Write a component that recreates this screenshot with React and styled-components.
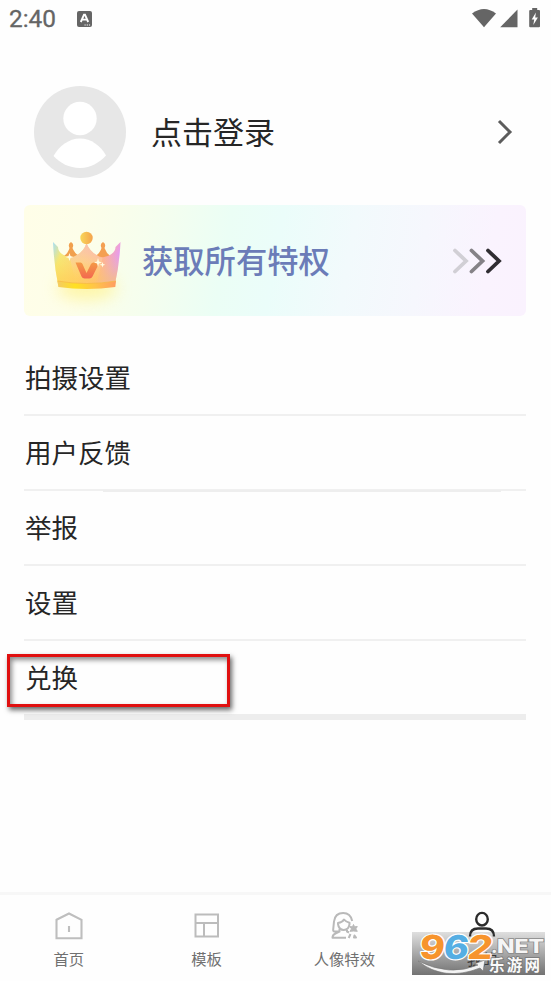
import React, { Component } from "react"
import styled, { createGlobalStyle } from "styled-components"

const GlobalStyle = createGlobalStyle`
* {
  box-sizing: border-box;
}
body {
  margin: 0;
  background: #fefefe;
  font-family: Roboto, "Noto Sans CJK SC", sans-serif;
}
`

const Screen = styled.div`
display: flex;
flex-direction: column;
width: 551px;
height: 981px;
overflow: hidden;
background: #fefefe;
color: #262626;
`

const StatusBar = styled.header`
display: flex;
align-items: center;
height: 38px;
padding: 0 9px;
flex: none;
color: #656565;
`

const Time = styled.span`
width: 68px;
font-size: 24.4px;
line-height: 38px;
-webkit-text-stroke: 0.3px #656565;
`

const StatusIcons = styled.div`
margin-left: auto;
display: flex;
align-items: center;
height: 38px;
`

const Profile = styled.section`
display: flex;
align-items: center;
height: 92px;
margin-top: 48px;
padding: 0 38px 0 34px;
flex: none;
`

const Login = styled.span`
flex: 1;
padding-top: 4px;
margin-left: 25px;
font-size: 31px;
line-height: 46px;
`

const Banner = styled.section`
display: flex;
align-items: center;
height: 111px;
margin: 27px 25px 0 24px;
padding-right: 23px;
flex: none;
border-radius: 6px;
background: linear-gradient(100deg, #fffee8 0%, #fdfee9 12%, #f5feee 26%, #ebfef5 40%, #ebfdfa 50%, #f2fafc 64%, #f6f7fd 78%, #faf3fe 91%, #faf2fe 100%);
`

const BannerText = styled.span`
flex: 1;
margin-left: 6px;
padding-top: 4px;
color: #6b7cb8;
font-size: 31.3px;
font-weight: 500;
line-height: 46px;
`

const Menu = styled.ul`
list-style: none;
margin: 25px 25px 0 24px;
padding: 0;
flex: none;
`

const MenuItem = styled.li`
position: relative;
display: flex;
align-items: center;
height: ${(props) => (props.$last ? "79px" : "75px")};
padding: ${(props) => (props.$last ? "3px 0 0 1px" : "2px 0 0 1px")};
border-bottom: ${(props) => (props.$last ? "6px solid #ededed" : "2px solid #f0f0f0")};
font-size: 26.5px;
line-height: 40px;
`

const Thick = styled.i`
position: absolute;
left: 79px;
right: 25px;
bottom: -3px;
height: 2px;
background: #eeeeee;
`

const Highlight = styled.div`
position: absolute;
left: -17px;
top: 13px;
width: 223px;
height: 53px;
border: 3px solid #e01010;
box-shadow: 2px 3px 5px rgba(0, 0, 0, 0.6), inset 2px 3px 5px rgba(0, 0, 0, 0.45);
`

const TabBar = styled.nav`
position: relative;
display: flex;
height: 89px;
margin-top: auto;
flex: none;
border-top: 3px solid #f7f7f7;
`

const Tab = styled.div`
display: flex;
flex: 1;
flex-direction: column;
align-items: center;
padding-top: 16px;
color: ${(props) => (props.$active ? "#333333" : "#707070")};
font-size: 15.3px;
line-height: 22px;

svg {
  margin-bottom: 8px;
}
`

const Watermark = styled.div`
position: absolute;
left: 412px;
top: 37px;
width: 133px;
height: 43px;
background: linear-gradient(rgba(60, 60, 60, 0.16), rgba(60, 60, 60, 0.72));

svg {
  display: block;
}
`

const KeyboardIcon = () => (
  <svg width="15" height="16" viewBox="0 0 15 16">
    <rect width="15" height="16" rx="2" fill="#656565" />
    <path d="M3.8 11 7 3.7h1L11.2 11M5.2 8.6h4.6" fill="none" stroke="#fff" strokeWidth="1.9" />
    <path d="M7.5 14h1.2M9.7 14h1.2M11.9 14h1.2" stroke="#fff" strokeWidth="1.2" />
  </svg>
)

const SignalIcons = () => (
  <svg width="70" height="22" viewBox="0 0 70 22" fill="#656565">
    <path d="M0 5.5Q12 -3.5 24 5.5L12 19.2Z" />
    <path d="M45.5 1.5V19.2H28.2Z" />
    <path d="M60.2 0h5v2H67q1 0 1 1v15.3q0 1-1 1h-8.8q-1 0-1-1V3q0-1 1-1h2Z" />
    <path d="m63.9 4.4-4.2 7h2.5l-.9 5.6 4.6-7.4h-2.7Z" fill="#fff" />
  </svg>
)

const Avatar = () => (
  <svg width="92" height="92" viewBox="0 0 92 92">
    <circle cx="46" cy="46" r="46" fill="#e7e7e7" />
    <circle cx="46" cy="32.5" r="16.7" fill="#fff" />
    <path d="M19.5 70C25 60 35 52.5 46 52.5S67 60 72 69.5C66 76 57 82 46 82S26 77 19.5 70Z" fill="#fff" />
  </svg>
)

const Chevron = () => (
  <svg width="16" height="26" viewBox="0 0 16 26">
    <path d="m2 2 11 11L2 24" fill="none" stroke="#5c5c5c" strokeWidth="3" />
  </svg>
)

const Crown = () => (
  <svg width="112" height="111" viewBox="0 0 112 111">
    <defs>
      <linearGradient id="body" x1="0" y1="0" x2="1" y2=".25">
        <stop offset="0" stopColor="#a6def5" />
        <stop offset=".17" stopColor="#f5e87a" />
        <stop offset=".5" stopColor="#ffd080" />
        <stop offset=".78" stopColor="#ffb09a" />
        <stop offset="1" stopColor="#e59af5" />
      </linearGradient>
      <linearGradient id="warm" x1="0" y1="0" x2="0" y2="1">
        <stop offset=".25" stopColor="#ffdf40" stopOpacity="0" />
        <stop offset=".8" stopColor="#ffd04a" stopOpacity=".55" />
      </linearGradient>
      <linearGradient id="peak" x1="0" y1="0" x2="0" y2="1">
        <stop offset="0" stopColor="#f5b5cf" />
        <stop offset=".45" stopColor="#fcd09d" />
        <stop offset="1" stopColor="#ffd84f" stopOpacity="0" />
      </linearGradient>
      <linearGradient id="rim">
        <stop offset="0" stopColor="#f4cb63" />
        <stop offset=".3" stopColor="#ffe122" />
        <stop offset=".65" stopColor="#ffc34a" />
        <stop offset="1" stopColor="#ff9d62" />
      </linearGradient>
      <linearGradient id="ball">
        <stop offset="0" stopColor="#f8d75a" />
        <stop offset="1" stopColor="#f5a34c" />
      </linearGradient>
      <linearGradient id="vee" x1="0" y1="0" x2="0" y2="1">
        <stop offset="0" stopColor="#f49a45" />
        <stop offset="1" stopColor="#f36850" />
      </linearGradient>
      <filter id="glow" x="-50%" y="-80%" width="200%" height="260%">
        <feGaussianBlur stdDeviation="8" />
      </filter>
    </defs>
    <ellipse cx="63" cy="83" rx="30" ry="12" fill="#fff07d" opacity=".6" filter="url(#glow)" />
    <path d="M38 52q6-3 7.500-9-2-4 1.500-6 3.500 2 1.500 6 2 6 9 9v8H38Z" fill="#f1a04d" />
    <path d="M69 52q7-3 8.500-9-2-4 1.500-6 3.500 2 1.500 6 2 6 7.500 9v8H69Z" fill="#f4a052" />
    <path d="M29 37q3 3 5 5 0 4 4 7 8 6 15 1 7-4 9.500-12 3 8 10 12 7 5 15-1 4-3 4-7 2-2 5-5-1 22-5.500 42-28.500 7-57 0Q30 60 29 37Z" fill="url(#body)" />
    <path d="M29 37q3 3 5 5 0 4 4 7 8 6 15 1 7-4 9.500-12 3 8 10 12 7 5 15-1 4-3 4-7 2-2 5-5-1 22-5.500 42-28.500 7-57 0Q30 60 29 37Z" fill="url(#warm)" />
    <path d="M62.500 38q3 8 10 12 4 3 6 3l-6 27H52l-6-27q4-1 7-3 7-4 9.500-12Z" fill="url(#peak)" opacity=".6" />
    <path d="M33.500 76q29 5 58.500 0l-.7 6q-28.500 4-57 0Z" fill="url(#rim)" />
    <path d="M33.500 76q29 5 58.500 0" fill="none" stroke="#f7b944" strokeWidth=".7" />
    <circle cx="62.500" cy="33" r="6.200" fill="url(#ball)" />
    <path d="M51.500 57.500h5q1.500 0 2 1.500l4 9 4.500-9q.8-1.500 2.500-1.500h6l-7 14q-1 2-3 2h-5q-2 0-3-2Z" fill="url(#vee)" />
    <path d="m45.500 48 1 3 3 1-3 1-1 3-1-3-3-1 3-1ZM74 53l1 3.500 3 1-3 1-1 3.500-1-3.500-3-1 3-1ZM78.500 57l.7 2 2 .7-2 .7-.7 2-.7-2-2-.7 2-.7Z" fill="#fffbe0" />
  </svg>
)

const Arrows = () => (
  <svg width="52" height="28" viewBox="0 0 52 28" fill="none" strokeWidth="3.800" strokeLinecap="round">
    <path d="M4 3.500 15 14 4 24.500" stroke="#d1cfd5" />
    <path d="M20.500 3.500 31.500 14 20.500 24.500" stroke="#858287" />
    <path d="M37 3.500 48 14 37 24.500" stroke="#302d32" />
  </svg>
)

const HomeIcon = () => (
  <svg width="30" height="30" viewBox="0 0 30 30" fill="none" stroke="#bebebe" strokeWidth="2.1">
    <path d="M2.500 8.800 15 2.500 27.500 8.800v18.500h-25ZM15 15v6" />
  </svg>
)

const TemplateIcon = () => (
  <svg width="30" height="30" viewBox="0 0 30 30" fill="none" stroke="#bcbcbc" strokeWidth="2">
    <path d="M3.500 3.500H26v22H3.500ZM3.500 12H26M12 12v13.500" />
  </svg>
)

const PortraitIcon = () => (
  <svg width="30" height="30" viewBox="0 0 30 30" fill="none" stroke="#b9b9b9" strokeWidth="2" strokeLinejoin="round">
    <path d="M17 26.800H3.500q0-3 3-4.300l4-1.800V18M10 20.500H5.500q-1.500 0-1.300-2L5 10.500Q6 2 14.200 2q7.300 0 9 8" />
    <path d="M9 12q4.500-.8 6-3.500 2 2.500 5.500 3.200v1.500q-.7 5.800-5.700 5.800T9 13ZM18 19v1.500l2 1" />
    <path d="m24.500 13.500 1 2.300 2.800-.2-1.500 2.300 1.500 2.400-3.800-.3-3.500.3 1.500-2.400-1.500-2.300 2.500.2Z" fill="#b9b9b9" strokeWidth="1" />
    <path d="m21.500 23-1.800 4M25.500 24.500l1.500 2h-2Z" />
  </svg>
)

const UserIcon = () => (
  <svg width="30" height="30" viewBox="0 0 30 30" fill="none" stroke="#2b2b2b" strokeWidth="2.400">
    <ellipse cx="15" cy="8.200" rx="5.800" ry="6.300" />
    <path d="M3 25.500Q3 17.500 11 17.500h8q8 0 8 8" />
  </svg>
)

const logoFont = { fontFamily: 'Inter, "Liberation Sans", sans-serif', fontWeight: 800, paintOrder: "stroke" }

const SiteLogo = () => (
  <svg width="133" height="43" viewBox="0 0 133 43" overflow="visible">
    <path d="M6 29q32 16 60 4l-4-1 11-4-2 11-3-3Q32 50 6 29Z" fill="#f3f3f3" stroke="#777" strokeWidth=".6" />
    <g transform="skewX(-6)" style={logoFont} fontSize="33" stroke="#fff" strokeWidth="2.400" strokeLinejoin="round">
      <text x="9.500" y="26.500" textLength="25" lengthAdjust="spacingAndGlyphs" fill="#f7942d">9</text>
      <text x="33.500" y="26.500" textLength="25" lengthAdjust="spacingAndGlyphs" fill="#55aee3">6</text>
      <text x="57.500" y="26.500" textLength="25" lengthAdjust="spacingAndGlyphs" fill="#f7942d">2</text>
    </g>
    <g style={logoFont} fontSize="18.500" fill="#f5f5f5" stroke="#8a8a8a" strokeWidth="1.500">
      <text x="79" y="21">.</text>
      <text x="85" y="21" textLength="47" lengthAdjust="spacingAndGlyphs">NET</text>
    </g>
    <text x="77" y="39" textLength="51" fontFamily="Noto Sans CJK SC, sans-serif" fontWeight="700" fontSize="15.500" fill="#fafafa" stroke="#777" strokeWidth="1.600" style={{ paintOrder: "stroke" }}>乐游网</text>
  </svg>
)

const tabs = [
  { name: "首页", icon: <HomeIcon /> },
  { name: "模板", icon: <TemplateIcon /> },
  { name: "人像特效", icon: <PortraitIcon /> },
  { name: "我的", icon: <UserIcon />, active: true },
]

class App extends Component {

  state = {
    menu: ["拍摄设置", "用户反馈", "举报", "设置", "兑换"],
  }

  render() {
    const { menu } = this.state
    return (
      <Screen>
        <GlobalStyle />
        <StatusBar>
          <Time>2:40</Time>
          <KeyboardIcon />
          <StatusIcons>
            <SignalIcons />
          </StatusIcons>
        </StatusBar>
        <Profile>
          <Avatar />
          <Login>点击登录</Login>
          <Chevron />
        </Profile>
        <Banner>
          <Crown />
          <BannerText>获取所有特权</BannerText>
          <Arrows />
        </Banner>
        <Menu>
          {menu.map((item, index) => (
            <MenuItem key={item} $last={index === menu.length - 1}>
              {item}
              {index === 1 && <Thick />}
              {index === menu.length - 1 && <Highlight />}
            </MenuItem>
          ))}
        </Menu>
        <TabBar>
          {tabs.map((item) => (
            <Tab key={item.name} $active={item.active}>
              {item.icon}
              {item.name}
            </Tab>
          ))}
          <Watermark>
            <SiteLogo />
          </Watermark>
        </TabBar>
      </Screen>
    )
  }
}

export default App
